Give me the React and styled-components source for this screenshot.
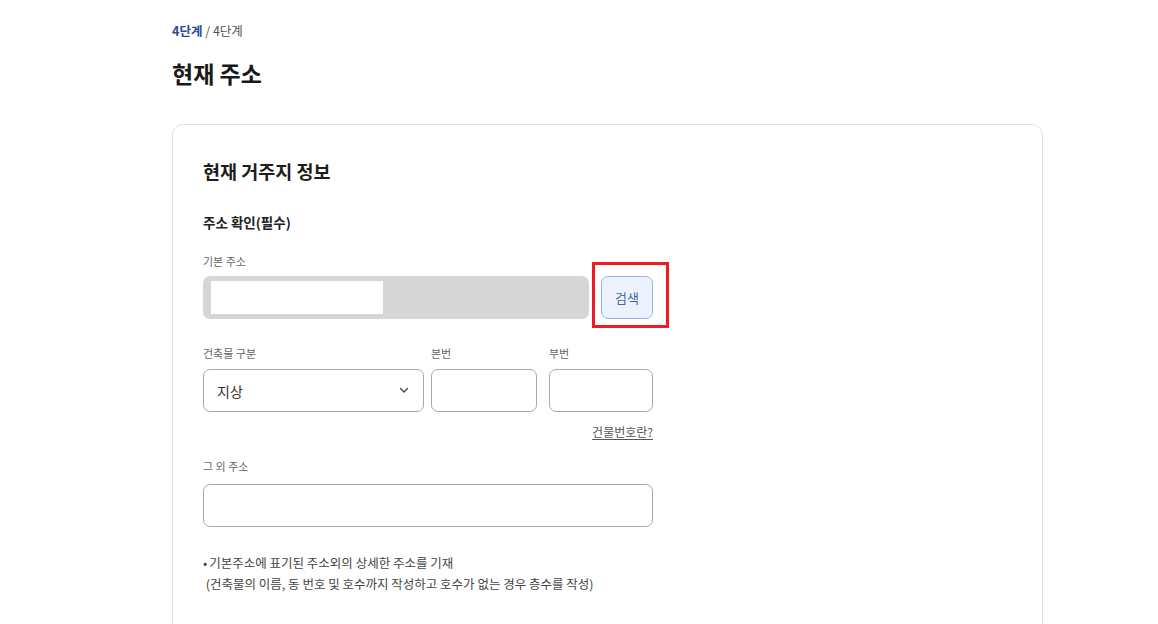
import React from 'react';
import styled, { createGlobalStyle } from 'styled-components';

const GlobalStyle = createGlobalStyle`
  body {
    margin: 0;
    background: #fff;
    font-family: "Noto Sans CJK KR", "Noto Sans", sans-serif;
    color: #222;
  }
`;

const Page = styled.div`
  padding: 22px 0 0 172px;
  width: 871px;
`;

const Crumb = styled.div`
  font-size: 12.5px;
  line-height: 17px;
  color: #555;

  b {
    color: #2a4c9c;
    font-weight: 700;
  }
`;

const Title = styled.h1`
  margin: 18px 0 0;
  font-size: 23px;
  line-height: 32px;
  font-weight: 700;
  color: #1a1a1a;
`;

const Card = styled.section`
  margin-top: 35px;
  border: 1px solid #e2e2e2;
  border-radius: 11px;
  height: 560px;
  padding: 34px 30px 0;
`;

const CardTitle = styled.h2`
  margin: 0;
  font-size: 18.5px;
  line-height: 24px;
  font-weight: 700;
  color: #1d1d1d;
`;

const SubTitle = styled.h3`
  margin: 30px 0 0;
  font-size: 13.5px;
  line-height: 18px;
  font-weight: 700;
  color: #222;
`;

const Form = styled.div`
  width: 450px;
`;

const Label = styled.div`
  margin-top: ${p => p.$top || 0}px;
  font-size: 11px;
  line-height: 14px;
  color: #666;
  margin-bottom: ${p => p.$bottom || 8}px;
`;

const Row = styled.div`
  display: flex;
  align-items: stretch;
  gap: ${p => p.$gap || 12}px;
  margin-top: ${p => p.$top || 0}px;
`;

const ReadOnly = styled.div`
  flex: 1;
  height: 43px;
  border-radius: 7px;
  background: #d6d6d6;
  padding: 5px 8px;
  box-sizing: border-box;
`;

const Masked = styled.div`
  width: 172px;
  height: 33px;
  background: #fff;
`;

const ButtonWrap = styled.div`
  position: relative;
`;

const SearchButton = styled.button`
  width: 52px;
  height: 43px;
  border: 1px solid #94b4ea;
  border-radius: 7px;
  background: #ecf3ff;
  color: #4c669c;
  font-family: inherit;
  font-size: 13px;
  padding: 0;
`;

const Highlight = styled.div`
  position: absolute;
  left: -9px;
  top: -14px;
  right: -16px;
  bottom: -9px;
  border: 3px solid #ec1c24;
  pointer-events: none;
`;

const Field = styled.div`
  width: ${p => p.$w}px;
  margin-left: ${p => p.$ml || 0}px;
  display: flex;
  flex-direction: column;
`;

const Box = styled.div`
  height: 43px;
  border: 1px solid #a8a8a8;
  border-radius: 7px;
  box-sizing: border-box;
  display: flex;
  align-items: center;
  justify-content: space-between;
  padding: 0 14px 0 13px;
  font-size: 14px;
  color: #333;
`;

const HelpLink = styled.div`
  text-align: right;
  margin-top: 12px;
  font-size: 12px;
  line-height: 16px;
  color: #555;
  text-decoration: underline;
  text-underline-offset: 2px;
`;

const Notes = styled.ul`
  list-style: none;
  margin: 25px 0 0;
  padding: 0;
  font-size: 12.5px;
  line-height: 21px;
  color: #444;
  white-space: nowrap;
`;

const Note = styled.li`
  &::before {
    content: "•";
    margin-right: 2px;
  }
`;

const Chevron = () => (
  <svg width="10" height="7" viewBox="0 0 10 7" fill="none">
    <path d="M1.5 1.5 L5 5 L8.5 1.5" stroke="#444" strokeWidth="1.4" strokeLinecap="round" strokeLinejoin="round" />
  </svg>
);

export default function App() {
  return (
    <Page>
      <GlobalStyle />
      <Crumb><b>4단계</b> / 4단계</Crumb>
      <Title>현재 주소</Title>

      <Card>
        <CardTitle>현재 거주지 정보</CardTitle>
        <SubTitle>주소 확인(필수)</SubTitle>

        <Form>
          <Label $top={23}>기본 주소</Label>
          <Row $gap={12}>
            <ReadOnly><Masked /></ReadOnly>
            <ButtonWrap>
              <SearchButton>검색</SearchButton>
              <Highlight />
            </ButtonWrap>
          </Row>

          <Row $gap={7} $top={27}>
            <Field $w={221}>
              <Label $bottom={9}>건축물 구분</Label>
              <Box>지상<Chevron /></Box>
            </Field>
            <Field $w={106}>
              <Label $bottom={9}>본번</Label>
              <Box />
            </Field>
            <Field $w={104} $ml={5}>
              <Label $bottom={9}>부번</Label>
              <Box />
            </Field>
          </Row>
          <HelpLink>건물번호란?</HelpLink>

          <Label $top={19} $bottom={11}>그 외 주소</Label>
          <Box />

          <Notes>
            <Note>기본주소에 표기된 주소외의 상세한 주소를 기재</Note>
            <li>&nbsp;(건축물의 이름, 동 번호 및 호수까지 작성하고 호수가 없는 경우 층수를 작성)</li>
          </Notes>
        </Form>
      </Card>
    </Page>
  );
}
